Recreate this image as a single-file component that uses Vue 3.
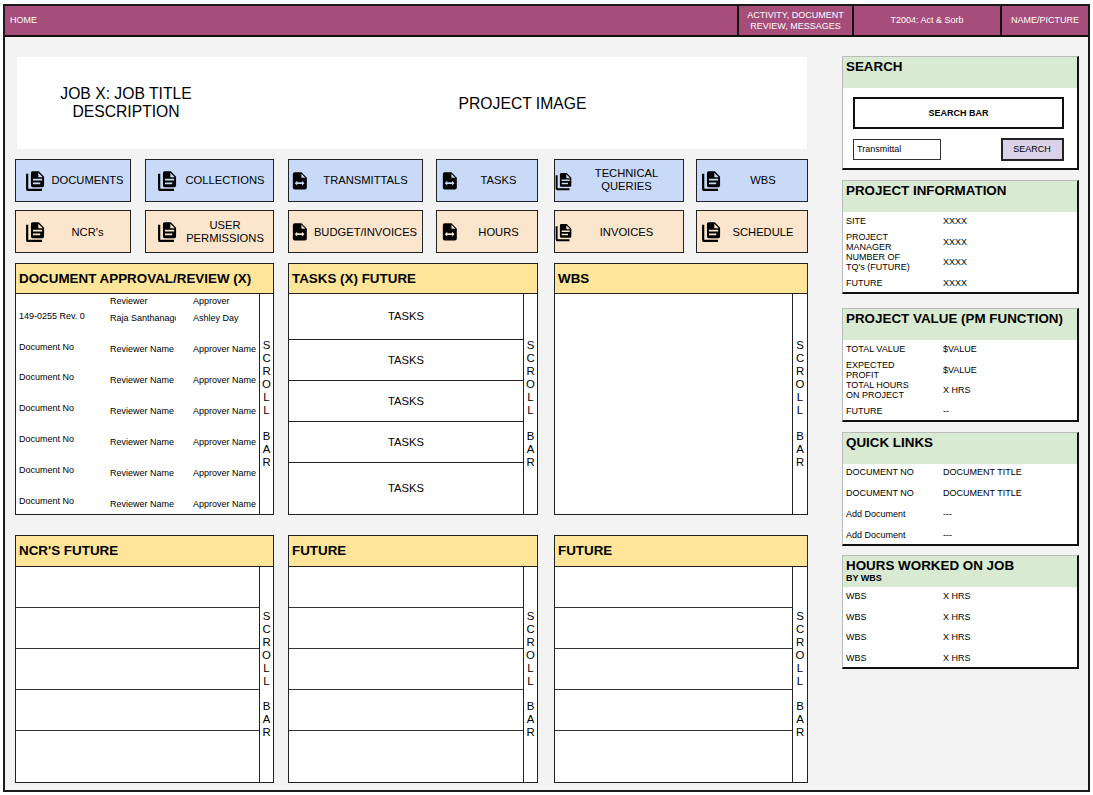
<template>
  <div class="frame">
    <header class="nav">
      <div class="nav-home">HOME</div>
      <div class="nav-item activity">ACTIVITY, DOCUMENT<br />REVIEW, MESSAGES</div>
      <div class="nav-item job">T2004: Act &amp; Sorb</div>
      <div class="nav-item name">NAME/PICTURE</div>
    </header>

    <main class="main">
      <section class="left">
        <div class="hero">
          <div class="hero-title">JOB X: JOB TITLE<br />DESCRIPTION</div>
          <div class="hero-image">PROJECT IMAGE</div>
        </div>

        <div class="tiles">
          <div v-for="tile in tiles" :key="tile.label" class="tile" :class="tile.tone">
            <svg class="icon" viewBox="0 0 24 24" aria-hidden="true">
              <path v-if="tile.icon === 'stack'" fill-rule="evenodd" d="M10 2.3H16.5L22 8V17.3A1.7 1.7 0 0 1 20.3 19H10A1.7 1.7 0 0 1 8.3 17.3V4A1.7 1.7 0 0 1 10 2.3ZM16 3.8V8.6H20.7ZM10.4 10.2V11.9H20V10.2ZM10.4 14.2V15.9H18V14.2ZM3.2 5H5.5V20.7H19.8V23H5.2A2 2 0 0 1 3.2 21Z" />
              <path v-else fill-rule="evenodd" d="M6 3.4H13L18.6 9V19.4A2 2 0 0 1 16.6 21.4H6A2 2 0 0 1 4 19.4V5.4A2 2 0 0 1 6 3.4ZM13 5V9H17ZM8.6 12.3L6 14.8L8.6 17.3V15.7H13.6V17.3L16.2 14.8L13.6 12.3V13.9H8.6Z" />
            </svg>
            <span class="tile-label" v-html="tile.label"></span>
          </div>
        </div>

        <div class="panels">
          <article class="panel">
            <h2>DOCUMENT APPROVAL/REVIEW (X)</h2>
            <div class="panel-body">
              <div class="docs">
                <div class="doc-head">
                  <span></span><span>Reviewer</span><span>Approver</span>
                </div>
                <div class="doc-row first">
                  <span class="doc-no">149-0255 Rev. 0</span>
                  <span class="clip">Raja Santhanago</span>
                  <span>Ashley Day</span>
                </div>
                <div v-for="n in 6" :key="n" class="doc-row">
                  <span class="doc-no">Document No</span>
                  <span>Reviewer Name</span>
                  <span>Approver Name</span>
                </div>
              </div>
              <div class="scroll">
                <span v-for="(ch, i) in scrollText" :key="i">{{ ch }}</span>
              </div>
            </div>
          </article>

          <article class="panel">
            <h2>TASKS (X) FUTURE</h2>
            <div class="panel-body">
              <div class="tasks">
                <div v-for="n in 5" :key="n" class="task">TASKS</div>
              </div>
              <div class="scroll">
                <span v-for="(ch, i) in scrollText" :key="i">{{ ch }}</span>
              </div>
            </div>
          </article>

          <article class="panel">
            <h2>WBS</h2>
            <div class="panel-body">
              <div class="blank"></div>
              <div class="scroll">
                <span v-for="(ch, i) in scrollText" :key="i">{{ ch }}</span>
              </div>
            </div>
          </article>

          <article v-for="title in lowerPanels" :key="title.key" class="panel lower">
            <h2>{{ title.text }}</h2>
            <div class="panel-body">
              <div class="lines">
                <div v-for="n in 5" :key="n" class="line"></div>
              </div>
              <div class="scroll">
                <span v-for="(ch, i) in scrollText" :key="i">{{ ch }}</span>
              </div>
            </div>
          </article>
        </div>
      </section>

      <aside class="side">
        <div class="card search">
          <h3>SEARCH</h3>
          <div class="search-body">
            <div class="search-bar">SEARCH BAR</div>
            <div class="search-row">
              <input class="search-input" value="Transmittal" />
              <button class="search-btn">SEARCH</button>
            </div>
          </div>
        </div>

        <div v-for="card in cards" :key="card.title" class="card" :class="card.cls">
          <h3>{{ card.title }}<small v-if="card.sub">{{ card.sub }}</small></h3>
          <div class="rows">
            <div v-for="row in card.rows" :key="row[0] + row[1]" class="row">
              <span v-html="row[0]"></span>
              <span>{{ row[1] }}</span>
            </div>
          </div>
        </div>
      </aside>
    </main>
  </div>
</template>

<script setup>
const scrollText = ["S", "C", "R", "O", "L", "L", "\u00a0", "B", "A", "R"]

const tiles = [
  { label: "DOCUMENTS", icon: "stack", tone: "blue" },
  { label: "COLLECTIONS", icon: "stack", tone: "blue" },
  { label: "TRANSMITTALS", icon: "file", tone: "blue" },
  { label: "TASKS", icon: "file", tone: "blue" },
  { label: "TECHNICAL<br>QUERIES", icon: "stack", tone: "blue" },
  { label: "WBS", icon: "stack", tone: "blue" },
  { label: "NCR's", icon: "stack", tone: "peach" },
  { label: "USER<br>PERMISSIONS", icon: "stack", tone: "peach" },
  { label: "BUDGET/INVOICES", icon: "file", tone: "peach" },
  { label: "HOURS", icon: "file", tone: "peach" },
  { label: "INVOICES", icon: "stack", tone: "peach" },
  { label: "SCHEDULE", icon: "stack", tone: "peach" },
]

const lowerPanels = [
  { key: "ncr", text: "NCR'S FUTURE" },
  { key: "f1", text: "FUTURE" },
  { key: "f2", text: "FUTURE" },
]

const cards = [
  {
    title: "PROJECT INFORMATION",
    cls: "info",
    rows: [
      ["SITE", "XXXX"],
      ["PROJECT<br>MANAGER", "XXXX"],
      ["NUMBER OF<br>TQ's (FUTURE)", "XXXX"],
      ["FUTURE", "XXXX"],
    ],
  },
  {
    title: "PROJECT VALUE (PM FUNCTION)",
    cls: "value",
    rows: [
      ["TOTAL VALUE", "$VALUE"],
      ["EXPECTED<br>PROFIT", "$VALUE"],
      ["TOTAL HOURS<br>ON PROJECT", "X HRS"],
      ["FUTURE", "--"],
    ],
  },
  {
    title: "QUICK LINKS",
    cls: "links",
    rows: [
      ["DOCUMENT NO", "DOCUMENT TITLE"],
      ["DOCUMENT NO ", "DOCUMENT TITLE"],
      ["Add Document", "---"],
      ["Add Document ", "---"],
    ],
  },
  {
    title: "HOURS WORKED ON JOB",
    sub: "BY WBS",
    cls: "hours",
    rows: [
      ["WBS", "X HRS"],
      ["WBS ", "X HRS"],
      ["WBS  ", "X HRS"],
      ["WBS   ", "X HRS"],
    ],
  },
]
</script>

<style>
body {
  background: #fff;
}
</style>

<style scoped>
.frame {
  box-sizing: border-box;
  width: 1087px;
  height: 788px;
  margin: 4px 0 0 3px;
  border: 2px solid #1a1a1a;
  background: #f3f3f3;
  font-family: "Liberation Sans", Arial, sans-serif;
  color: #000;
}

.nav {
  display: flex;
  height: 31px;
  box-sizing: border-box;
  border-bottom: 2px solid #111;
  background: #a64d79;
  color: #fff;
  font-size: 9px;
  line-height: 10.5px;
}
.nav-home {
  flex: 1;
  align-self: center;
  padding: 0 0 1px 5px;
}
.nav-item {
  display: flex;
  align-items: center;
  justify-content: center;
  box-sizing: border-box;
  border-left: 2px solid #111;
  text-align: center;
}
.activity {
  width: 115px;
}
.job {
  width: 148px;
  padding-bottom: 1px;
}
.name {
  width: 88px;
  padding-bottom: 1px;
}

.main {
  display: flex;
  padding: 19px 0 0 10px;
}
.left {
  width: 793px;
  margin-right: 34px;
}

.hero {
  display: grid;
  grid-template-columns: 218px 1fr;
  align-items: center;
  height: 92px;
  margin: 1px 1px 10px 2px;
  background: #fff;
  font-size: 15.7px;
  line-height: 18px;
  text-align: center;
}
.hero-image {
  padding: 1px 0 0 3px;
}

.tiles {
  display: grid;
  grid-template-columns: 130px 143px 148px 118px 142px 112px;
  grid-auto-rows: 43px;
  row-gap: 8px;
  margin-bottom: 10px;
}
.tile {
  display: flex;
  align-items: center;
  box-sizing: border-box;
  border: 1px solid #222;
  font-size: 11.2px;
  line-height: 13px;
  padding-right: 3px;
}
.tile:nth-child(6n + 1) {
  margin-right: 14px;
  padding: 0 1px 0 7px;
}
.tile:nth-child(6n + 2) {
  margin-right: 14px;
  padding: 0 1px 0 9px;
}
.tile:nth-child(6n + 3) {
  margin-right: 13px;
  padding-left: 0;
}
.tile:nth-child(6n + 4) {
  margin-right: 16px;
  padding: 0 2px 0 2px;
}
.tile:nth-child(6n + 5) {
  margin-right: 12px;
  padding-left: 0;
}
.tile:nth-child(6n) {
  padding-left: 2px;
}
.tile:nth-child(6n + 5) .icon {
  width: 20px;
  height: 20px;
  margin-left: -2px;
}
.tile:nth-child(5) .tile-label {
  margin-top: -2px;
}
.peach .tile-label {
  margin-top: 2px;
}
.tile:nth-child(8) .tile-label {
  margin-top: 0;
}
.blue {
  background: #c9daf8;
}
.peach {
  background: #fce5cd;
}
.icon {
  flex: none;
  width: 23px;
  height: 23px;
  fill: #000;
}
.tile-label {
  flex: 1;
  text-align: center;
}

.panels {
  display: grid;
  grid-template-columns: 273px 266px 254px;
  grid-template-rows: 252px 248px;
  row-gap: 20px;
}
.panel {
  display: flex;
  flex-direction: column;
  box-sizing: border-box;
  border: 1px solid #222;
  background: #fff;
}
.panel:nth-child(3n + 1) {
  margin-right: 14px;
}
.panel:nth-child(3n + 2) {
  margin-right: 16px;
}
.panel h2 {
  flex: none;
  height: 29px;
  margin: 0;
  padding-left: 3px;
  border-bottom: 1px solid #222;
  background: #ffe599;
  font-size: 13.4px;
  line-height: 29px;
}
.panel.lower h2 {
  height: 30px;
  line-height: 29px;
}
.panel-body {
  flex: 1;
  display: flex;
  min-height: 0;
}
.scroll {
  flex: none;
  display: flex;
  flex-direction: column;
  align-items: center;
  justify-content: center;
  width: 13px;
  border-left: 1px solid #222;
  font-size: 11.4px;
  line-height: 12.9px;
}
.panel:nth-child(3n) .scroll {
  width: 14px;
}

.docs {
  flex: 1;
  font-size: 9px;
  line-height: 10px;
}
.doc-head,
.doc-row {
  display: grid;
  grid-template-columns: 91px 83px 1fr;
  align-items: center;
  padding-left: 3px;
  white-space: nowrap;
}
.doc-head {
  height: 14px;
}
.doc-row {
  height: 21px;
  margin-top: 10px;
}
.doc-row.first {
  height: 20px;
  margin-top: 0;
}
.doc-no {
  margin-bottom: 6px;
}
.doc-row.first .doc-no,
.doc-row.first + .doc-row .doc-no {
  margin-bottom: 4px;
}
.clip {
  width: 66px;
  overflow: hidden;
}

.tasks {
  flex: 1;
  display: grid;
  grid-template-rows: 45px 41px 41px 41px 1fr;
  font-size: 11.2px;
}
.task {
  display: flex;
  align-items: center;
  justify-content: center;
  border-top: 1px solid #222;
}
.task:first-child {
  border-top: 0;
  padding-bottom: 2px;
}
.task:last-child {
  padding-bottom: 2px;
}

.blank {
  flex: 1;
}
.lines {
  flex: 1;
  display: grid;
  grid-template-rows: 40px 41px 41px 41px 1fr;
}
.line {
  border-top: 1px solid #333;
}
.line:first-child {
  border-top: 0;
}

.side {
  width: 237px;
}
.card {
  box-sizing: border-box;
  height: 114px;
  margin-bottom: 10px;
  border: 1px solid #bbb;
  border-right: 2px solid #111;
  border-bottom: 2px solid #111;
  background: #fff;
}
.card h3 {
  height: 31px;
  box-sizing: border-box;
  margin: 0;
  padding: 2px 0 0 3px;
  background: #d9ead3;
  font-size: 13.4px;
  line-height: 16px;
}
.card h3 small {
  display: block;
  font-size: 9px;
  line-height: 8px;
}
.search-body {
  padding: 9px 13px 0 10px;
}
.search-bar {
  box-sizing: border-box;
  height: 32px;
  border: 2px solid #111;
  font-size: 9px;
  font-weight: bold;
  line-height: 28px;
  text-align: center;
}
.search-row {
  display: flex;
  justify-content: space-between;
  align-items: center;
  margin-top: 9px;
}
.search-input {
  box-sizing: border-box;
  width: 88px;
  height: 21px;
  padding: 0 3px 2px;
  border: 1px solid #333;
  border-radius: 0;
  outline: none;
  background: #fff;
  font: 9px "Liberation Sans", Arial, sans-serif;
  color: #000;
}
.search-btn {
  box-sizing: border-box;
  width: 63px;
  height: 23px;
  padding: 0 1px 2px 0;
  border: 2px solid #222;
  border-radius: 0;
  background: #d9d2e9;
  font: 9px "Liberation Sans", Arial, sans-serif;
  color: #000;
}
.rows {
  margin-top: -1px;
  padding-left: 3px;
  font-size: 9px;
  line-height: 10px;
}
.row {
  display: grid;
  grid-template-columns: 97px 1fr;
  align-items: center;
  height: 20.5px;
}
.info {
  margin-bottom: 14px;
}
.links {
  margin-bottom: 9px;
}
.links .row {
  height: 21px;
}
.links .rows {
  margin-top: -3px;
}
.hours {
  margin-bottom: 0;
}
</style>
